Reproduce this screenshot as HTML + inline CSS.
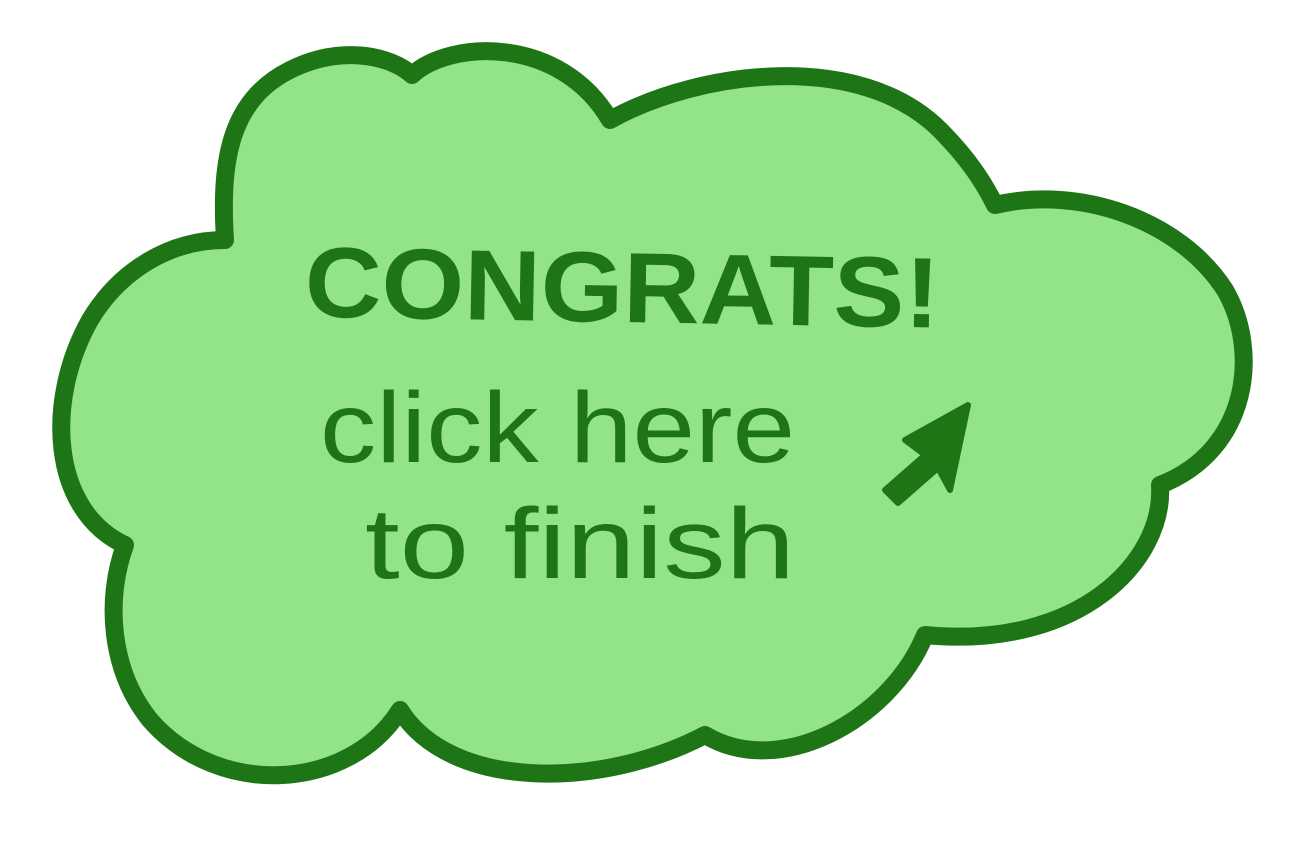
<!DOCTYPE html>
<html><head><meta charset="utf-8"><style>
html,body{margin:0;padding:0;background:#fff;width:1290px;height:856px;overflow:hidden}
svg{display:block}
</style></head><body>
<svg width="1290" height="856" viewBox="0 0 1290 856" xmlns="http://www.w3.org/2000/svg">
<path d="M 225 240
C 220 160, 230 100, 290 70
C 340 45, 390 55, 412 75
C 450 40, 560 35, 610 120
C 700 70, 860 50, 940 130
C 970 160, 985 185, 995 205
C 1080 185, 1180 220, 1225 290
C 1260 350, 1250 450, 1160 485
C 1165 560, 1080 650, 925 635
C 890 720, 780 780, 705 735
C 600 790, 450 790, 400 710
C 350 790, 220 800, 150 720
C 110 670, 105 600, 125 545
C 50 510, 45 400, 90 320
C 120 270, 170 240, 225 240 Z"
fill="#93e38a" stroke="#1e7516" stroke-width="18" stroke-linejoin="round"/>
<g fill="#1e7516" font-family="Liberation Sans, sans-serif">
<text x="305" y="322" font-size="100" font-weight="bold" textLength="635" lengthAdjust="spacingAndGlyphs" transform="rotate(1 620 280)">CONGRATS!</text>
<text x="320" y="462" font-size="100" textLength="475" lengthAdjust="spacingAndGlyphs">click here</text>
<text x="365" y="578" font-size="100" textLength="430" lengthAdjust="spacingAndGlyphs">to finish</text>
</g>
<path d="M968 405 L905 440 L925 455 L885 490 L898 503 L938 468 L950 490 Z" fill="#1e7516" stroke="#1e7516" stroke-width="6" stroke-linejoin="round"/>
</svg>
</body></html>
